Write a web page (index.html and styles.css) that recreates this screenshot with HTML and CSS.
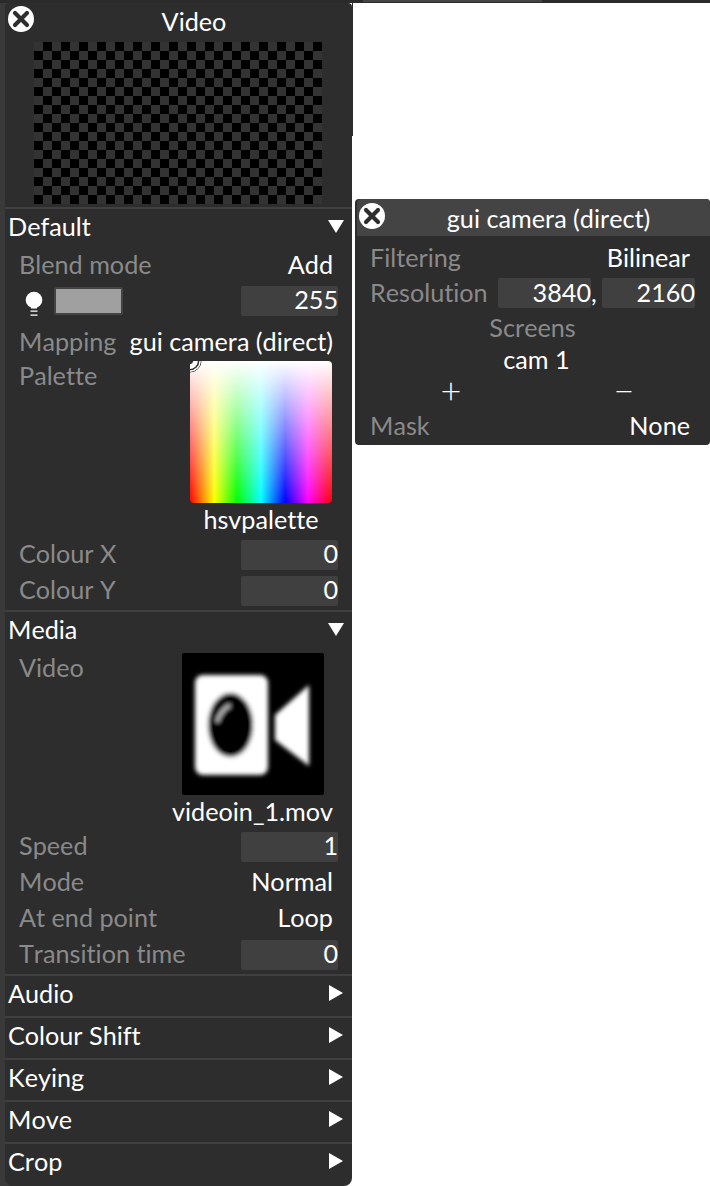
FILE: index.html
```html
<!DOCTYPE html>
<html lang="en">
<head>
<meta charset="utf-8">
<title>Video</title>
<link rel="stylesheet" href="styles.css">
</head>
<body>
<div class="rail"></div>
<div class="topbar"><div class="tab"></div></div>
<div class="edge"></div>
<section class="window main">
  <header class="title">
    <svg class="close" viewBox="0 0 26 26"><circle cx="13" cy="13" r="13" fill="#fff"/><path d="M7 7l12 12M19 7L7 19" stroke="#2d2d2d" stroke-width="4.200" stroke-linecap="round"/></svg>
    <span>Video</span>
  </header>
  <div class="preview"></div>

  <div class="sec">
    <div class="sec-head"><span>Default</span><i class="tri-down"></i></div>
    <div class="body">
      <div class="row"><span class="lbl">Blend mode</span><span class="val">Add</span></div>
      <div class="row colour">
        <svg class="bulb" viewBox="0 0 18 26"><circle cx="9" cy="9" r="8.300" fill="#fff"/><path d="M6 16h6v1.500H6zM5.500 19.500h7v1.300h-7zM5.500 23.500h7v1.300h-7z" fill="#fff"/></svg>
        <span class="swatch"></span>
        <span class="num">255</span>
      </div>
      <div class="row mapping"><span class="lbl">Mapping</span><span class="val">gui camera (direct)</span></div>
      <div class="row palette-row">
        <span class="lbl">Palette</span>
        <div class="pick">
          <div class="palette"><svg class="handle" viewBox="0 0 14 14"><circle cx="0" cy="0" r="11" fill="none" stroke="#2d2d2d" stroke-width="1"/><circle cx="0" cy="0" r="10" fill="none" stroke="#fff" stroke-width="1.300"/><circle cx="0" cy="0" r="8.500" fill="none" stroke="#2d2d2d" stroke-width="1.700"/><circle cx="0" cy="0" r="7" fill="none" stroke="#fff" stroke-width="1.300"/><circle cx="0" cy="0" r="3" fill="#2d2d2d"/></svg></div>
          <span class="val cap">hsvpalette</span>
        </div>
      </div>
      <div class="row"><span class="lbl">Colour X</span><span class="num">0</span></div>
      <div class="row"><span class="lbl">Colour Y</span><span class="num">0</span></div>
    </div>
  </div>

  <div class="sec">
    <div class="sec-head"><span>Media</span><i class="tri-down"></i></div>
    <div class="body">
      <div class="row video-row">
        <span class="lbl">Video</span>
        <div class="pick">
          <div class="thumb">
            <svg viewBox="0 0 142 142">
              <defs><filter id="soft"><feGaussianBlur stdDeviation="1.900"/></filter></defs>
              <g filter="url(#soft)">
                <rect x="13" y="22" width="73" height="100" rx="8" fill="#fff"/>
                <ellipse cx="48.500" cy="72" rx="22.500" ry="32" fill="#000"/>
                <path d="M35 69Q38 58 48 52" fill="none" stroke="#c4c4c4" stroke-width="3.500"/>
                <path d="M93 62L127 32V113L93 87Z" fill="#fff"/>
              </g>
            </svg>
          </div>
          <span class="val cap">videoin_1.mov</span>
        </div>
      </div>
      <div class="row"><span class="lbl">Speed</span><span class="num">1</span></div>
      <div class="row"><span class="lbl">Mode</span><span class="val">Normal</span></div>
      <div class="row"><span class="lbl">At end point</span><span class="val">Loop</span></div>
      <div class="row"><span class="lbl">Transition time</span><span class="num">0</span></div>
    </div>
  </div>

  <div class="sec"><div class="sec-head"><span>Audio</span><i class="tri-right"></i></div></div>
  <div class="sec"><div class="sec-head"><span>Colour Shift</span><i class="tri-right"></i></div></div>
  <div class="sec"><div class="sec-head"><span>Keying</span><i class="tri-right"></i></div></div>
  <div class="sec"><div class="sec-head"><span>Move</span><i class="tri-right"></i></div></div>
  <div class="sec"><div class="sec-head"><span>Crop</span><i class="tri-right"></i></div></div>
</section>

<section class="window cam">
  <header class="title cam-title">
    <svg class="close" viewBox="0 0 26 26"><circle cx="13" cy="13" r="13" fill="#fff"/><path d="M7 7l12 12M19 7L7 19" stroke="#2d2d2d" stroke-width="4.200" stroke-linecap="round"/></svg>
    <span>gui camera (direct)</span>
  </header>
  <div class="cam-body">
    <div class="row"><span class="lbl">Filtering</span><span class="val">Bilinear</span></div>
    <div class="row res">
      <span class="lbl">Resolution</span>
      <span class="pair"><span class="num">3840</span><span class="comma">,</span><span class="num">2160</span></span>
    </div>
    <div class="row screens"><span class="lbl">Screens</span></div>
    <div class="row cam1"><span class="val">cam 1</span></div>
    <div class="row plusminus"><span class="pm">+</span><span class="pm">−</span></div>
    <div class="row mask"><span class="lbl">Mask</span><span class="val">None</span></div>
  </div>
</section>
</body>
</html>
```
FILE: styles.css
```css
* { box-sizing: border-box; }
html, body { margin: 0; height: 100%; }
body {
  position: relative;
  width: 710px;
  height: 1186px;
  overflow: hidden;
  background: #fff;
  font-family: Lato, "Open Sans", sans-serif;
  font-size: 25.200px;
  font-variant-ligatures: none;
  font-kerning: none;
  line-height: 30px;
  color: #fff;
}
.rail { position: absolute; left: 0; top: 0; bottom: 0; width: 20px; background: #393939; }
.topbar { position: absolute; left: 0; top: 0; width: 100%; height: 3px; padding-left: 363px; background: #2b2b2b; }
.tab { width: 179px; height: 2px; background: #444; }
.edge { position: absolute; left: 352px; top: 3px; width: 1px; height: 133px; background: #2d2d2d; }
.window { position: absolute; background: #2d2d2d; }
.main {
  left: 5px;
  top: 3px;
  width: 347px;
  height: 1183px;
  border-radius: 4px 4px 8px 8px;
}
.title {
  position: relative;
  height: 39px;
  display: flex;
  align-items: center;
  justify-content: center;
}
.title span { margin: -3px 0 0 31px; }
.close { position: absolute; left: 3px; top: 3px; width: 26px; height: 26px; }
.preview {
  width: 288px;
  height: 162px;
  margin: 0 0 3px 29px;
  background: repeating-conic-gradient(#000 0 25%, #333 0 50%) 0 0 / 18px 18px;
}
.sec { border-top: 2px solid #404040; }
.sec-head {
  height: 40px;
  padding: 0 8px 6px 3px;
  display: flex;
  align-items: center;
  justify-content: space-between;
}
.tri-down { width: 0; height: 0; border: 8px solid transparent; border-top: 13px solid #fff; border-bottom: 0; }
.tri-right { width: 0; height: 0; border: 8px solid transparent; border-left: 14px solid #fff; border-right: 0; margin-right: 1px; }
.body { margin-top: -2px; padding: 0 14px 1px 14px; }
.row {
  height: 36px;
  display: flex;
  align-items: center;
  justify-content: space-between;
}
.lbl { color: #8a8a8a; margin-bottom: 2px; }
.val { color: #fff; margin: 0 5px 2px 0; }
.palette-row ~ .row .lbl, .video-row ~ .row .lbl { margin-bottom: 4px; }
.palette-row ~ .row .val, .video-row ~ .row .val { margin-bottom: 4px; }
.num {
  width: 97px;
  height: 30px;
  background: #404040;
  border-radius: 2px;
  text-align: right;
  line-height: 27px;
  color: #fff;
}
.colour { justify-content: flex-start; }
.bulb { width: 18px; height: 26px; margin: 6px 0 0 6px; }
.swatch {
  width: 69px;
  height: 28px;
  margin-left: 11px;
  background: #a0a0a0;
  border: 2px solid #444;
  border-radius: 2px;
}
.colour .num { margin-left: auto; }
.mapping { margin-top: 5px; }
.palette-row { height: 177px; align-items: flex-start; padding-top: 1px; }
.video-row { height: 179px; align-items: flex-start; padding-top: 3px; }
.palette-row .lbl, .video-row .lbl { margin-top: -1px; }
.pick { display: flex; flex-direction: column; align-items: flex-end; }
.palette {
  position: relative;
  width: 142px;
  height: 142px;
  margin: 0 6px 1px 0;
  border-radius: 4px;
  background:
    linear-gradient(to bottom, #fff 0%, rgba(255,255,255,0) 100%),
    linear-gradient(to right, #f00, #ff0 17%, #0f0 33%, #0ff 50%, #00f 67%, #f0f 83%, #f00);
}
.handle { position: absolute; left: 0; top: 0; width: 14px; height: 14px; }
.palette-row .cap { align-self: center; margin-right: 6px; }
.thumb { width: 142px; height: 142px; margin: 0 14px 1px 0; background: #000; border-radius: 2px; }
.thumb svg { display: block; width: 142px; height: 142px; }

.cam {
  left: 355px;
  top: 199px;
  width: 355px;
  height: 246px;
  border-radius: 4px;
}
.cam-title { height: 37px; background: #444; margin-left: 2px; border-radius: 4px 4px 0 0; }
.cam-title span { margin: 1px 0 0 30px; }
.cam-title .close { left: 2px; top: 4px; }
.cam-body { padding: 4px 15px 0 15px; }
.cam-body .val { margin-right: 5px; }
.res { margin-top: -1px; }
.res .num { width: 93px; line-height: 28px; }
.pair { display: flex; }
.comma { width: 11px; color: #fff; line-height: 28px; }
.screens { height: 34px; justify-content: center; }
.cam1 { height: 30px; justify-content: center; }
.cam1 .val { margin: 0 0 2px 8px; }
.plusminus { height: 30px; justify-content: flex-start; gap: 133px; padding-left: 61px; }
.pm { width: 40px; text-align: center; font-size: 36px; font-weight: 300; color: #fff; }
.mask { margin-top: 3px; }
```
